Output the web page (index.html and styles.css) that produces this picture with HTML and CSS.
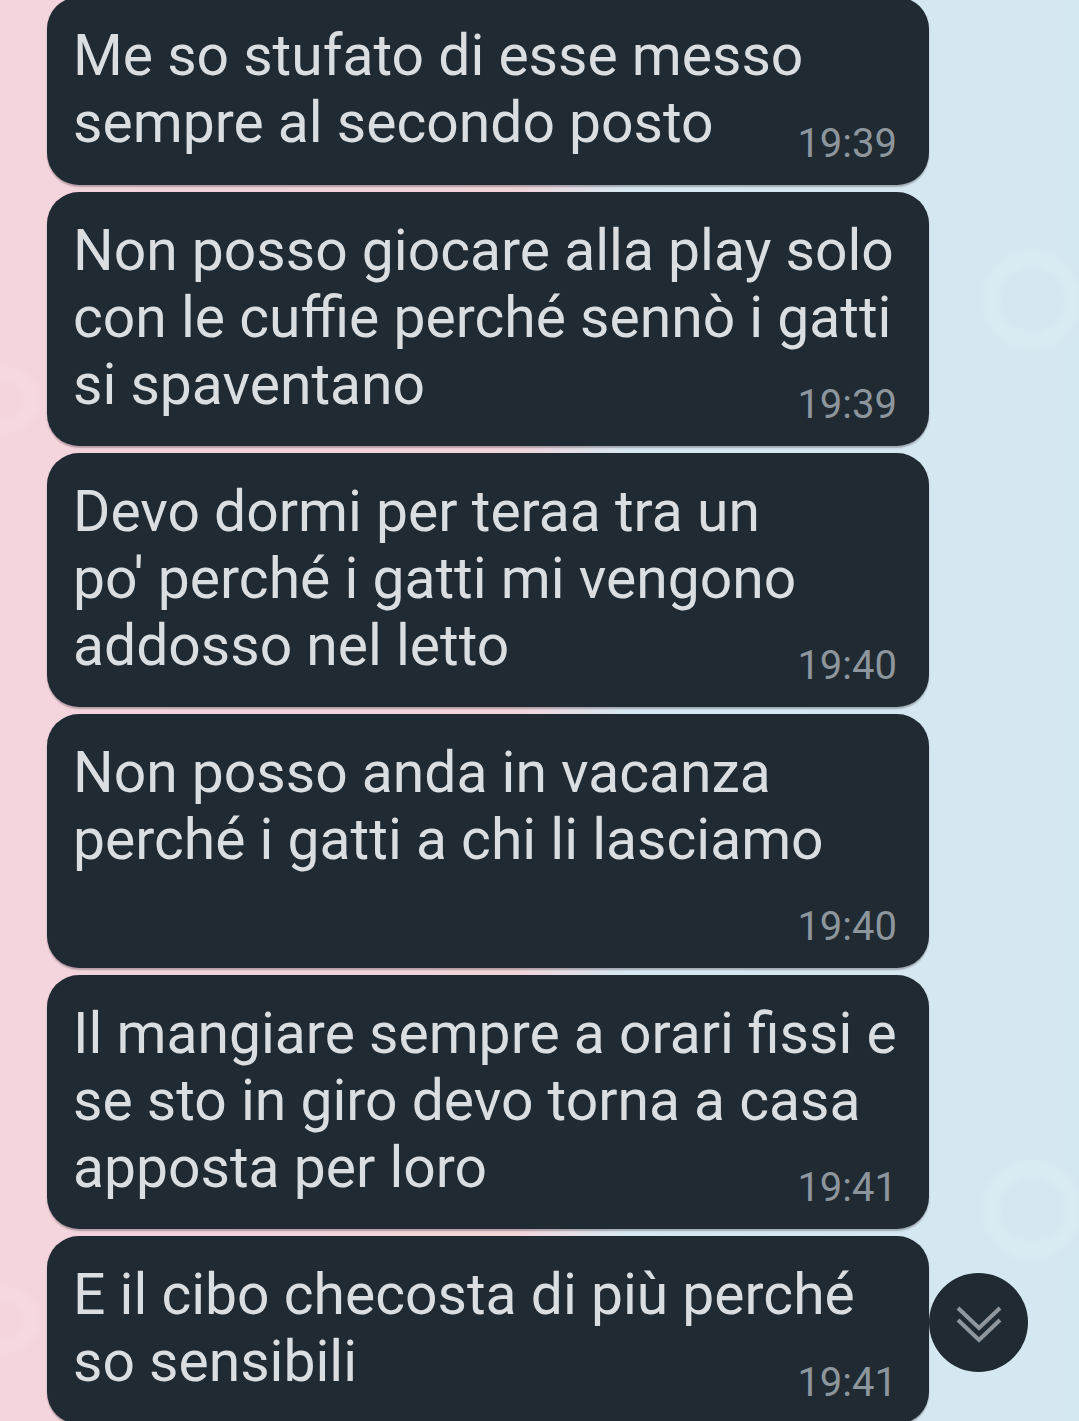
FILE: index.html
```html
<!DOCTYPE html>
<html lang="it">
<head>
<meta charset="utf-8">
<title>Chat</title>
<link rel="stylesheet" href="styles.css">
</head>
<body>
<div class="chat">
  <div class="bubble two">
    <div class="text">Me so stufato di esse messo<br>sempre al secondo posto</div>
    <span class="time">19:39</span>
  </div>
  <div class="bubble">
    <div class="text">Non posso giocare alla play solo<br>con le cuffie perché sennò i gatti<br>si spaventano</div>
    <span class="time">19:39</span>
  </div>
  <div class="bubble">
    <div class="text">Devo dormi per teraa tra un<br>po' perché i gatti mi vengono<br>addosso nel letto</div>
    <span class="time">19:40</span>
  </div>
  <div class="bubble">
    <div class="text">Non posso anda in vacanza<br>perché i gatti a chi li lasciamo<br>&nbsp;</div>
    <span class="time">19:40</span>
  </div>
  <div class="bubble">
    <div class="text">Il mangiare sempre a orari fissi e<br>se sto in giro devo torna a casa<br>apposta per loro</div>
    <span class="time">19:41</span>
  </div>
  <div class="bubble two">
    <div class="text">E il cibo checosta di più perché<br>so sensibili</div>
    <span class="time">19:41</span>
  </div>
</div>
<button class="scroll-down" aria-label="Scorri in basso">
  <svg width="50" height="40" viewBox="0 0 50 40" fill="none" stroke="#8f979d" stroke-width="4" stroke-linecap="butt" stroke-linejoin="miter">
    <polyline points="4,5 25,25 46,5"/>
    <polyline points="4,17 25,37 46,17"/>
  </svg>
</button>
</body>
</html>
```
FILE: styles.css
```css
* { box-sizing: border-box; }
html, body {
  margin: 0;
  padding: 0;
  height: 100%;
  overflow: hidden;
}
body {
  width: 1079px;
  height: 1421px;
  font-family: Roboto, "Noto Sans", sans-serif;
  background:
    radial-gradient(circle at 1032px 300px, rgba(255,255,255,0) 28px, rgba(255,255,255,0.12) 38px, rgba(255,255,255,0.12) 44px, rgba(255,255,255,0) 54px),
    radial-gradient(circle at 1032px 1210px, rgba(255,255,255,0) 28px, rgba(255,255,255,0.12) 38px, rgba(255,255,255,0.12) 44px, rgba(255,255,255,0) 54px),
    radial-gradient(circle at 4px 400px, rgba(255,255,255,0) 16px, rgba(255,255,255,0.1) 24px, rgba(255,255,255,0.1) 30px, rgba(255,255,255,0) 38px),
    radial-gradient(circle at 4px 1320px, rgba(255,255,255,0) 16px, rgba(255,255,255,0.1) 24px, rgba(255,255,255,0.1) 30px, rgba(255,255,255,0) 38px),
    linear-gradient(90deg, #f5d5dd 0%, #f3d5dc 48%, #d6e8f1 58%, #d4e8f1 100%);
  position: relative;
}
.chat {
  display: flex;
  flex-direction: column;
  gap: 7px;
  padding-left: 47px;
  margin-top: -3px;
}
.bubble {
  position: relative;
  width: 882px;
  height: 254px;
  background: #202a33;
  border-radius: 32px;
  padding: 25px 32px 0 26px;
  box-shadow: 0 1.5px 1.5px rgba(40, 30, 40, 0.3);
}
.bubble.two {
  height: 188px;
}
.text {
  color: #dbdee1;
  font-size: 57px;
  line-height: 67px;
  white-space: nowrap;
}
.time {
  position: absolute;
  right: 32px;
  bottom: 21px;
  color: #8d969c;
  font-size: 40px;
  line-height: 40px;
}
.scroll-down {
  position: absolute;
  left: 929px;
  top: 1273px;
  width: 99px;
  height: 99px;
  border: none;
  border-radius: 50%;
  background: #202a33;
  padding: 0;
  display: flex;
  align-items: center;
  justify-content: center;
}
.scroll-down svg {
  display: block;
}
```
